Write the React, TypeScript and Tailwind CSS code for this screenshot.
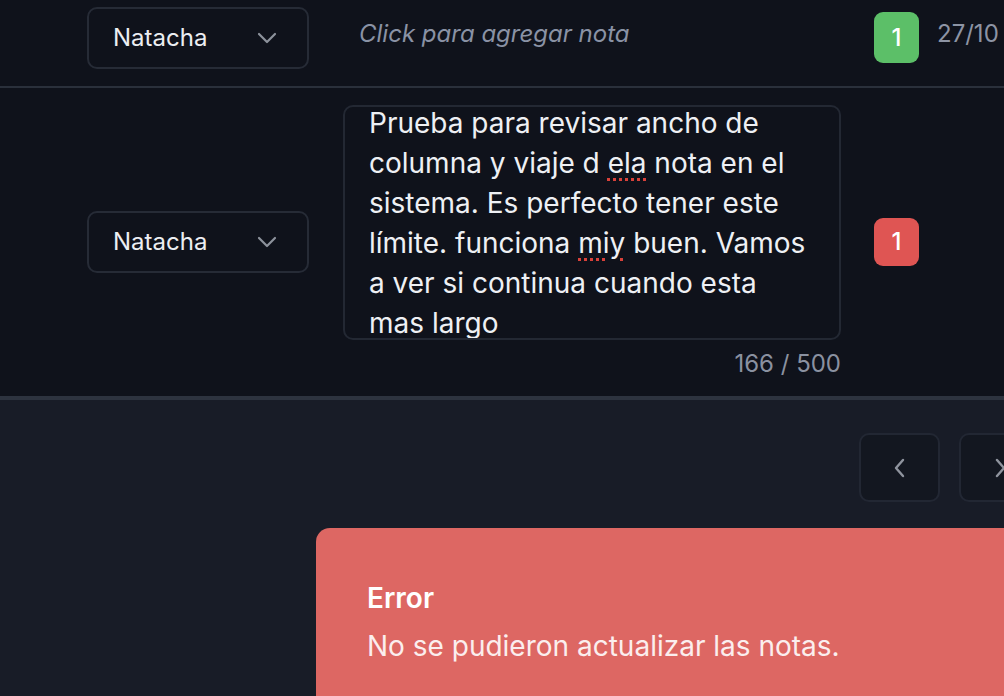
import React from "react";

const Chevron = () => (
  <svg width="20" height="12" viewBox="0 0 20 12" fill="none" className="shrink-0">
    <path d="M2 2l8 8 8-8" stroke="#8d929c" strokeWidth="2.2" strokeLinecap="round" strokeLinejoin="round" />
  </svg>
);

const Select = () => (
  <div className="w-[222px] h-[62px] rounded-[10px] border-2 border-[#262b36] flex items-center justify-between pl-[24px] pr-[30px] text-[24px] text-[#eceef2]">
    <span>Natacha</span>
    <Chevron />
  </div>
);

export default function App() {
  return (
    <div
      className="w-[1004px] h-[696px] overflow-hidden bg-[#181c27] relative"
      style={{ fontFamily: "Inter, 'Noto Sans', sans-serif" }}
    >
      <div className="bg-[#0f121b]">
        {/* Row 1 */}
        <div className="h-[88px] flex items-start pt-[7px] border-b-2 border-[#2a303b]">
          <div className="ml-[87px]">
            <Select />
          </div>
          <div className="ml-[50px] w-[498px] shrink-0 pt-[12px] text-[24px] italic text-[#8a92a5] leading-[30px]">
            Click para agregar nota
          </div>
          <div className="ml-[17px] mt-[5px] w-[45px] h-[51px] shrink-0 rounded-[9px] bg-[#5cbf68] text-white text-[24px] font-medium flex items-center justify-center">
            1
          </div>
          <div className="ml-[18px] pt-[12px] text-[24px] text-[#8d94a4] leading-[30px] whitespace-nowrap">27/10</div>
        </div>
        {/* Row 2 */}
        <div className="h-[312px] flex items-center border-b-4 border-[#2d333f]">
          <div className="ml-[87px]">
            <Select />
          </div>
          <div className="ml-[34px] w-[498px] flex flex-col">
            <div className="h-[235px] rounded-[10px] border-2 border-[#232833] overflow-hidden pl-[24px] pr-[30px]">
              <p className="-mt-[4px] text-[28px] leading-[40px] text-[#eef0f4]">
                Prueba para revisar ancho de columna y viaje d{" "}
                <span className="underline decoration-dotted decoration-[#d9413a] decoration-[3px] underline-offset-[5px]">ela</span>{" "}
                nota en el sistema. Es perfecto tener este límite. funciona{" "}
                <span className="underline decoration-dotted decoration-[#d9413a] decoration-[3px] underline-offset-[5px]">miy</span>{" "}
                buen. Vamos a ver si continua cuando esta mas largo
              </p>
            </div>
            <div className="mt-[9px] text-right text-[24px] leading-[30px] text-[#8a91a0]">166 / 500</div>
          </div>
          <div className="ml-[33px] w-[45px] h-[48px] rounded-[9px] bg-[#df5553] text-white text-[24px] font-medium flex items-center justify-center">
            1
          </div>
        </div>
      </div>
      {/* Pagination */}
      <div className="flex gap-[19px] pl-[859px] pt-[33px]">
        <div className="w-[81px] h-[69px] shrink-0 rounded-[10px] border-2 border-[#222733] bg-[#131720] flex items-center justify-center">
          <svg width="14" height="22" viewBox="0 0 14 22" fill="none">
            <path d="M10 3L3 11l7 8" stroke="#8f949e" strokeWidth="2.4" strokeLinecap="round" strokeLinejoin="round" />
          </svg>
        </div>
        <div className="w-[81px] h-[69px] shrink-0 rounded-[10px] border-2 border-[#222733] bg-[#131720] flex items-center justify-center">
          <svg width="14" height="22" viewBox="0 0 14 22" fill="none">
            <path d="M4 3l7 8-7 8" stroke="#8f949e" strokeWidth="2.4" strokeLinecap="round" strokeLinejoin="round" />
          </svg>
        </div>
      </div>
      {/* Toast */}
      <div className="absolute left-[316px] top-[528px] w-[720px] h-[200px] rounded-tl-[14px] bg-[#dd6763] pl-[51px] pt-[53px]">
        <div className="text-[28px] font-semibold text-white leading-[34px]">Error</div>
        <div className="mt-[14px] text-[28px] text-[#fbeeee] leading-[34px]">No se pudieron actualizar las notas.</div>
      </div>
    </div>
  );
}
